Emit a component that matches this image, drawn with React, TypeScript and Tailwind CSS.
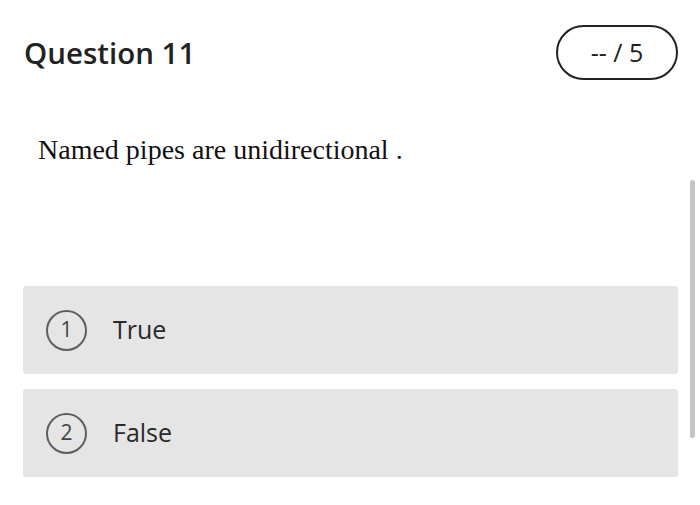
import React from "react";

const sans = { fontFamily: '"Open Sans", "Noto Sans", sans-serif' };

function Option({ n, label }: { n: number; label: string }) {
  return (
    <div className="flex h-[88px] items-center rounded-[3px] bg-[#e5e5e5] pl-[23px]">
      <div className="flex h-[41px] w-[41px] items-center justify-center rounded-full border-2 border-[#5e5e5e] text-[21px] text-[#444]">
        {n}
      </div>
      <div className="ml-[26px] text-[25px] text-[#2a2a2a]">{label}</div>
    </div>
  );
}

export default function App() {
  return (
    <div className="relative h-[505px] w-[700px] overflow-hidden bg-white" style={sans}>
      <div className="flex items-center justify-between pl-[24px] pr-[22px] pt-[25px]">
        <div className="text-[29.5px] font-semibold text-[#222] leading-none">Question 11</div>
        <div className="flex h-[55px] w-[122px] items-center justify-center rounded-full border-2 border-[#222] text-[25px] text-[#222]">
          -- / 5
        </div>
      </div>
      <div
        className="mt-[53px] pl-[38px] text-[28px] text-[#111] leading-[34px]"
        style={{ fontFamily: '"Liberation Serif", "Times New Roman", serif' }}
      >
        Named pipes are unidirectional .
      </div>
      <div className="mt-[119px] flex flex-col gap-[15px] pl-[23px] pr-[22px]">
        <Option n={1} label="True" />
        <Option n={2} label="False" />
      </div>
      <div className="absolute left-[690px] top-[180px] h-[258px] w-[5px] rounded-full bg-[#c4c4c4]" />
    </div>
  );
}
